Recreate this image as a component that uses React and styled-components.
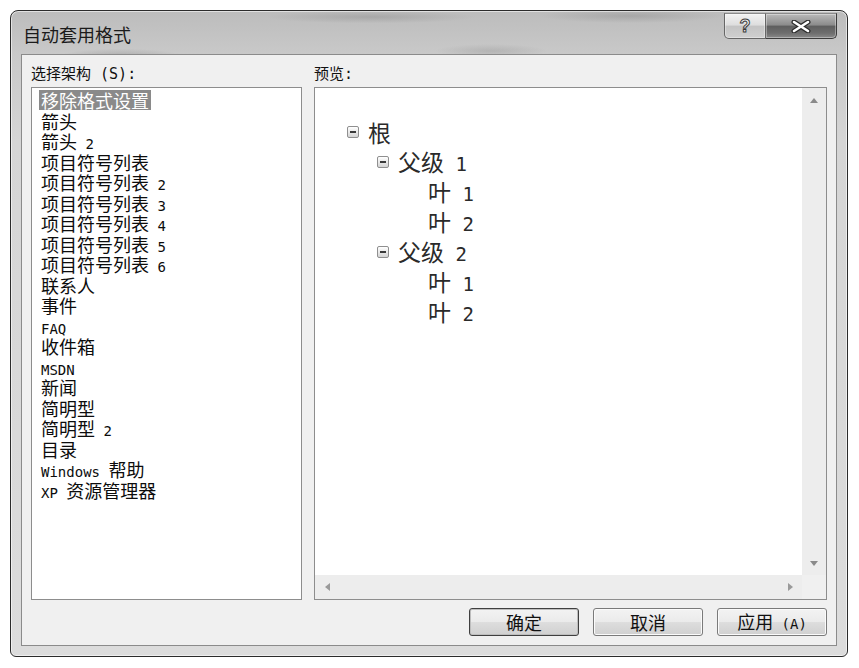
import React from 'react';
import styled, { createGlobalStyle } from 'styled-components';

const GlobalStyle = createGlobalStyle`
  html, body {
    margin: 0;
    padding: 0;
    background: #ffffff;
  }
  body {
    font-family: "Noto Sans CJK SC", "Noto Sans", sans-serif;
  }
`;

const Page = styled.div`
  padding: 10px 0 0 10px;
`;

const Window = styled.div`
  width: 838px;
  height: 647px;
  box-sizing: border-box;
  border: 1px solid #2b2b2b;
  border-radius: 8px 8px 6px 6px;
  padding: 0 10px 10px;
  display: flex;
  flex-direction: column;
  box-shadow: inset 0 0 0 1px rgba(255, 255, 255, 0.55);
  background:
    radial-gradient(ellipse 90px 12px at 110px 46px, rgba(100, 100, 100, 0.3), transparent 70%),
    radial-gradient(ellipse 150px 9px at 360px 6px, rgba(110, 110, 110, 0.28), transparent 70%),
    radial-gradient(ellipse 130px 10px at 620px 5px, rgba(110, 110, 110, 0.28), transparent 70%),
    radial-gradient(ellipse 80px 10px at 480px 40px, rgba(110, 110, 110, 0.22), transparent 70%),
    linear-gradient(180deg, #bcbcbc 0, #c9c9c9 44px, #d5d5d5 130px, #dcdcdc 100%);
`;

const TitleBar = styled.div`
  height: 43px;
  display: flex;
  align-items: flex-start;
`;

const Title = styled.div`
  margin: 14px 0 0 2px;
  font-size: 18px;
  line-height: 18px;
  color: #1b1b1b;
`;

const Captions = styled.div`
  margin: 2px 0 0 auto;
  display: flex;
`;

const CaptionButton = styled.div`
  height: 26px;
  width: ${(p) => (p.$close ? 71 : 42)}px;
  box-sizing: border-box;
  display: flex;
  align-items: center;
  justify-content: center;
  border: 1px solid ${(p) => (p.$close ? '#3c3c3c' : '#666666')};
  border-top-color: #8a8a8a;
  border-left-width: ${(p) => (p.$close ? 0 : 1)}px;
  border-radius: ${(p) => (p.$close ? '0 0 5px 0' : '0 0 0 5px')};
  box-shadow: inset 0 0 0 1px rgba(255, 255, 255, 0.35);
  background: ${(p) =>
    p.$close
      ? 'linear-gradient(180deg, #b9b9b9 0%, #8c8c8c 45%, #5f5f5f 52%, #6e6e6e 80%, #8a8a8a 100%)'
      : 'linear-gradient(180deg, #f2f2f2 0%, #dedede 45%, #c4c4c4 52%, #cfcfcf 100%)'};
`;

const HelpGlyph = styled.span`
  font-family: "Liberation Sans", sans-serif;
  font-weight: bold;
  font-size: 18px;
  line-height: 18px;
  color: #eeeeee;
  -webkit-text-stroke: 1px #3a3a3a;
`;

const Client = styled.div`
  flex: 1;
  box-sizing: border-box;
  border: 1px solid #8b8b8b;
  background: #f0f0f0;
  padding: 9px;
  display: grid;
  grid-template-columns: 271px 1fr;
  grid-template-rows: 23px 513px 8px 28px;
  column-gap: 12px;
`;

const Label = styled.div`
  font-size: 15px;
  line-height: 18px;
  color: #111111;
  white-space: pre;
`;

const Latin = styled.span`
  font-family: "DejaVu Sans Mono", "Liberation Mono", monospace;
  font-size: ${(p) => p.$size || 14}px;
`;

const ListBox = styled.div`
  box-sizing: border-box;
  border: 1px solid #8d8d8d;
  background: #ffffff;
  padding: 2px 0 0 7px;
  overflow: hidden;
`;

const ListItem = styled.div`
  height: 20.5px;
  line-height: 20.5px;
  font-size: 18px;
  white-space: pre;
`;

const ItemText = styled.span`
  display: inline-block;
  height: 20px;
  line-height: 20px;
  padding: 0 2px;
  background: ${(p) => (p.$selected ? '#8a8a8a' : 'transparent')};
  color: ${(p) => (p.$selected ? '#ffffff' : '#0c0c0c')};
`;

const PreviewBox = styled.div`
  box-sizing: border-box;
  border: 1px solid #8d8d8d;
  background: #ffffff;
  display: grid;
  grid-template-columns: 1fr 24px;
  grid-template-rows: 1fr 24px;
  overflow: hidden;
`;

const Tree = styled.div`
  padding: 29px 0 0 32px;
`;

const TreeRow = styled.div`
  display: flex;
  align-items: center;
  height: 30px;
  padding-left: ${(p) => p.$indent}px;
  font-size: 23px;
  color: #2a2a2a;
`;

const TreeLabel = styled.span`
  white-space: pre;
  line-height: 30px;
`;

const Toggle = styled.span`
  position: relative;
  width: 12px;
  height: 12px;
  box-sizing: border-box;
  border: 1px solid #8f8f8f;
  border-radius: 2px;
  background: linear-gradient(180deg, #ffffff, #d4d4d4);
  margin-right: 9px;
  flex: none;

  &::after {
    content: '';
    position: absolute;
    left: 2px;
    right: 2px;
    top: 4px;
    height: 2px;
    background: #3a3a3a;
  }
`;

const ScrollTrack = styled.div`
  background: #ededed;
  display: flex;
  flex-direction: ${(p) => (p.$vertical ? 'column' : 'row')};
  justify-content: space-between;
  align-items: center;
`;

const Corner = styled.div`
  background: #f0f0f0;
`;

const ArrowCell = styled.div`
  width: 24px;
  height: 24px;
  display: flex;
  align-items: center;
  justify-content: center;
`;

const Arrow = styled.span`
  width: 0;
  height: 0;
  border-style: solid;
  border-color: transparent;
  ${(p) =>
    ({
      up: 'border-width: 0 4px 5px 4px; border-bottom-color: #8a8a8a;',
      down: 'border-width: 5px 4px 0 4px; border-top-color: #8a8a8a;',
      left: 'border-width: 4px 5px 4px 0; border-right-color: #9a9a9a;',
      right: 'border-width: 4px 0 4px 5px; border-left-color: #9a9a9a;',
    })[p.$dir]}
`;

const Footer = styled.div`
  grid-column: 1 / 3;
  grid-row: 4;
  display: flex;
  justify-content: flex-end;
  gap: 14px;
`;

const Button = styled.div`
  width: 110px;
  height: 28px;
  box-sizing: border-box;
  display: flex;
  align-items: center;
  justify-content: center;
  border: 1px solid ${(p) => (p.$default ? '#3f3f3f' : '#7a7a7a')};
  border-radius: 3px;
  box-shadow: inset 0 0 0 1px ${(p) => (p.$default ? '#bdbdbd' : '#fbfbfb')};
  background: linear-gradient(180deg, #f3f3f3 0%, #ebebeb 48%, #dddddd 52%, #d0d0d0 100%);
  font-size: 18px;
  color: #111111;
`;

const ButtonLabel = styled.span`
  white-space: pre;
  line-height: 24px;
`;

const listItems = [
  '移除格式设置',
  '箭头',
  '箭头 2',
  '项目符号列表',
  '项目符号列表 2',
  '项目符号列表 3',
  '项目符号列表 4',
  '项目符号列表 5',
  '项目符号列表 6',
  '联系人',
  '事件',
  'FAQ',
  '收件箱',
  'MSDN',
  '新闻',
  '简明型',
  '简明型 2',
  '目录',
  'Windows 帮助',
  'XP 资源管理器',
];

const treeRows = [
  { text: '根', level: 0, open: true },
  { text: '父级 1', level: 1, open: true },
  { text: '叶 1', level: 2 },
  { text: '叶 2', level: 2 },
  { text: '父级 2', level: 1, open: true },
  { text: '叶 1', level: 2 },
  { text: '叶 2', level: 2 },
];

// wrap the ascii runs in a narrow mono face, like the half-width glyphs of the original
function runs(text, size) {
  return text
    .split(/([\x20-\x7e]+)/)
    .filter(Boolean)
    .map((part, i) =>
      /^[\x20-\x7e]+$/.test(part) ? (
        <Latin key={i} $size={size}>
          {part}
        </Latin>
      ) : (
        <React.Fragment key={i}>{part}</React.Fragment>
      )
    );
}

function CloseGlyph() {
  return (
    <svg width="22" height="13" viewBox="0 0 22 13">
      <path d="M4 2 L18 11 M18 2 L4 11" stroke="#2c2c2c" strokeWidth="5" strokeLinecap="round" />
      <path d="M4 2 L18 11 M18 2 L4 11" stroke="#ffffff" strokeWidth="2.6" strokeLinecap="round" />
    </svg>
  );
}

export default function App() {
  return (
    <Page>
      <GlobalStyle />
      <Window>
        <TitleBar>
          <Title>自动套用格式</Title>
          <Captions>
            <CaptionButton>
              <HelpGlyph>?</HelpGlyph>
            </CaptionButton>
            <CaptionButton $close>
              <CloseGlyph />
            </CaptionButton>
          </Captions>
        </TitleBar>
        <Client>
          <Label>{runs('选择架构 (S):', 15)}</Label>
          <Label>{runs('预览:', 15)}</Label>
          <ListBox>
            {listItems.map((item, i) => (
              <ListItem key={i}>
                <ItemText $selected={i === 0}>{runs(item, 14)}</ItemText>
              </ListItem>
            ))}
          </ListBox>
          <PreviewBox>
            <Tree>
              {treeRows.map((row, i) => (
                <TreeRow key={i} $indent={row.level * 30 + (row.open ? 0 : 21)}>
                  {row.open && <Toggle />}
                  <TreeLabel>{runs(row.text, 19)}</TreeLabel>
                </TreeRow>
              ))}
            </Tree>
            <ScrollTrack $vertical>
              <ArrowCell>
                <Arrow $dir="up" />
              </ArrowCell>
              <ArrowCell>
                <Arrow $dir="down" />
              </ArrowCell>
            </ScrollTrack>
            <ScrollTrack>
              <ArrowCell>
                <Arrow $dir="left" />
              </ArrowCell>
              <ArrowCell>
                <Arrow $dir="right" />
              </ArrowCell>
            </ScrollTrack>
            <Corner />
          </PreviewBox>
          <Footer>
            <Button $default>
              <ButtonLabel>确定</ButtonLabel>
            </Button>
            <Button>
              <ButtonLabel>取消</ButtonLabel>
            </Button>
            <Button>
              <ButtonLabel>{runs('应用 (A)', 14)}</ButtonLabel>
            </Button>
          </Footer>
        </Client>
      </Window>
    </Page>
  );
}
